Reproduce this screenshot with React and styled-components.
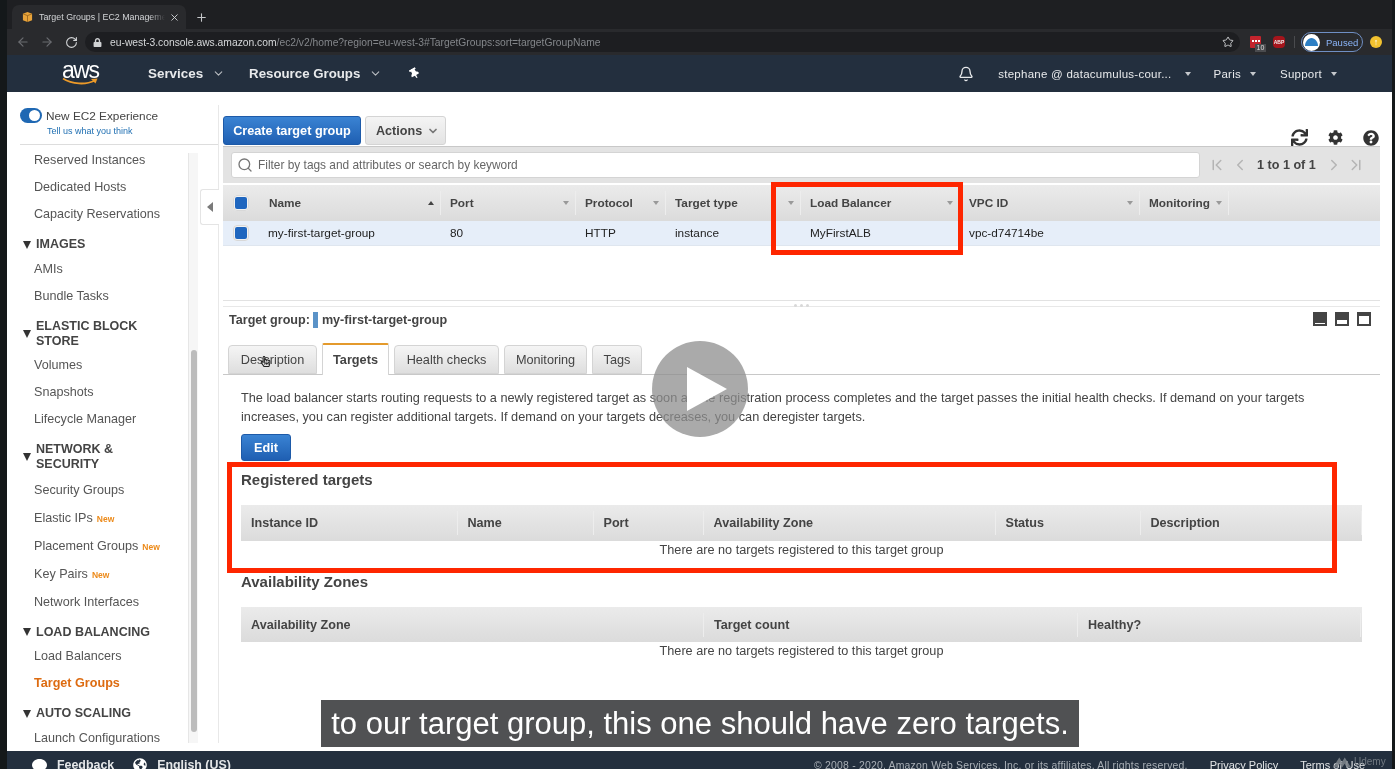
import React from 'react'
import styled, { createGlobalStyle } from 'styled-components'
import { ArrowLeft, ArrowRight, RotateCw, Star, Bell, Search, ChevronFirst, ChevronLast, ChevronLeft, ChevronRight, ChevronDown, X, Plus } from 'lucide-react'
import { FaLock, FaSync, FaCog, FaQuestionCircle, FaThumbtack, FaComment, FaGlobeAmericas, FaRegHandPointer } from 'react-icons/fa'

const Global = createGlobalStyle`
  html, body { margin: 0; padding: 0; background: #14181a; }
  body { font-family: "Liberation Sans", Arial, sans-serif; color: #444; }
  * { box-sizing: border-box; }
`

const Screen = styled.div`
  position: relative;
  width: 1395px;
  height: 769px;
  overflow: hidden;
  padding: 0 3px 0 7px;
  background: #14181a;
  display: flex;
  flex-direction: column;
  filter: blur(0.35px);
`

/* browser chrome */
const TabStrip = styled.div`
  height: 29px;
  background: #1e1f22;
  display: flex;
  align-items: flex-end;
  padding-left: 5px;
  flex: none;
`
const BrowserTab = styled.div`
  width: 174px;
  height: 24px;
  background: #292a2d;
  border-radius: 7px 7px 0 0;
  display: flex;
  align-items: center;
  padding: 0 6px 0 10px;
  color: #d2d4d6;
  font-size: 8.9px;
  white-space: nowrap;
  span {
    width: 126px;
    margin: 0 4px 0 6px;
    overflow: hidden;
    -webkit-mask-image: linear-gradient(90deg, #000 88%, transparent);
    mask-image: linear-gradient(90deg, #000 88%, transparent);
  }
`
const NewTab = styled.div`
  margin: 0 0 5px 9px;
  color: #c4c6c9;
  display: flex;
`
const Toolbar = styled.div`
  height: 26px;
  background: #292a2d;
  display: flex;
  align-items: center;
  padding-left: 4px;
  flex: none;
  color: #b6b8ba;
`
const NavButton = styled.div`
  width: 24px;
  display: flex;
  justify-content: center;
  color: ${p => (p.$off ? '#6a6c70' : '#d4d6d8')};
`
const Omnibox = styled.div`
  width: 1155px;
  height: 20px;
  margin-left: 2px;
  background: #1d1e21;
  border-radius: 10px;
  display: flex;
  align-items: center;
  padding: 0 6px 0 8px;
  font-size: 10.3px;
  color: #84878b;
  white-space: nowrap;
  b { font-weight: 400; color: #d6d8da; }
`
const LockIcon = styled(FaLock)`
  color: #d0d2d4;
  margin-right: 8px;
`
const Url = styled.div`
  flex: 1;
`
const ExtSlot = styled.div`
  position: relative;
  width: 12px;
  height: 12px;
  flex: none;
  margin-left: ${p => p.$gap}px;
`
const PassIcon = styled.div`
  width: 11px;
  height: 12px;
  background: #c3242d;
  border-radius: 1px;
  padding-top: 4px;
  display: flex;
  justify-content: center;
  gap: 1px;
  i {
    display: block;
    width: 2px;
    height: 2px;
    background: #fff;
  }
`
const PassBadge = styled.div`
  position: absolute;
  left: 5px;
  top: 8px;
  width: 11px;
  height: 8px;
  background: #4a4b4e;
  color: #ddd;
  font-size: 7px;
  line-height: 8px;
  text-align: center;
`
const AbpIcon = styled.div`
  width: 12px;
  height: 12px;
  border-radius: 4px;
  background: #a5151c;
  color: #eee;
  font-size: 5px;
  font-weight: 700;
  line-height: 12px;
  text-align: center;
`
const ToolSep = styled.div`
  width: 1px;
  height: 12px;
  background: #4a4b4e;
  margin-left: 9px;
`
const ProfilePill = styled.div`
  width: 62px;
  height: 20px;
  margin-left: 6px;
  border: 1px solid #6f8fc4;
  border-radius: 10px;
  display: flex;
  align-items: center;
  padding-left: 1px;
  gap: 6px;
  color: #8ab4f8;
  font-size: 9.5px;
`
const UpdateDot = styled.div`
  width: 12px;
  height: 12px;
  margin-left: 7px;
  border-radius: 50%;
  background: #f2c230;
  color: #fff;
  font-size: 9px;
  line-height: 12px;
  text-align: center;
`

/* aws console nav */
const AwsNav = styled.div`
  height: 37px;
  background: #232f3e;
  display: flex;
  align-items: center;
  color: #e8eaec;
  flex: none;
`
const AwsLogo = styled.div`
  width: 37px;
  margin-left: 55px;
  height: 27px;
  color: #fff;
  font-size: 23px;
  line-height: 20px;
  letter-spacing: -1.5px;
  svg { display: block; margin-top: -3px; }
`
const NavMenu = styled.div`
  display: flex;
  align-items: center;
  font-size: ${p => p.$size || 13.4}px;
  font-weight: 700;
  margin-left: ${p => p.$gap}px;
  gap: 9px;
  white-space: nowrap;
  svg { color: #b9bdc2; }
`
const NavRight = styled.div`
  margin-left: auto;
  display: flex;
  align-items: center;
  padding: 1px 55px 0 0;
`
const AccountMenu = styled.div`
  display: flex;
  align-items: center;
  font-size: 11.5px;
  letter-spacing: 0.25px;
  margin-left: ${p => p.$gap}px;
  gap: ${p => p.$caretGap || 9}px;
  white-space: nowrap;
`
const TinyCaret = styled.i`
  display: block;
  width: 0;
  height: 0;
  border-left: 3.5px solid transparent;
  border-right: 3.5px solid transparent;
  border-top: 4px solid #c5c8cc;
  flex: none;
`

/* page */
const Page = styled.div`
  flex: 1;
  min-height: 0;
  background: #fff;
  display: flex;
`
const Sidebar = styled.aside`
  position: relative;
  width: 212px;
  margin: 13px 0 8px;
  border-right: 1px solid #e8e8e8;
  display: flex;
  flex-direction: column;
  flex: none;
`
const ExperienceBox = styled.div`
  height: 40px;
  margin-left: 13px;
  border-bottom: 1px solid #ddd;
  display: flex;
  gap: 4px;
  padding-top: 3px;
  flex: none;
`
const Toggle = styled.div`
  width: 22px;
  height: 15px;
  background: #1f68b3;
  border-radius: 8px;
  display: flex;
  justify-content: flex-end;
  padding: 2px;
  &::after {
    content: '';
    width: 11px;
    height: 11px;
    background: #fff;
    border-radius: 50%;
  }
`
const ExperienceTitle = styled.div`
  font-size: 11.8px;
  line-height: 16px;
  color: #444;
  white-space: nowrap;
`
const FeedbackLink = styled.div`
  font-size: 9px;
  line-height: 14px;
  color: #1f6fb2;
  margin-left: 1px;
`
const NavWrap = styled.div`
  flex: 1;
  min-height: 0;
  display: flex;
`
const NavList = styled.div`
  width: 181px;
  padding: 2px 0 0 27px;
  flex: none;
`
const NavItem = styled.div`
  height: ${p => (p.$tall ? 28 : 27)}px;
  line-height: ${p => (p.$tall ? 28 : 27)}px;
  font-size: 12.6px;
  color: ${p => (p.$active ? '#dd6b10' : '#555')};
  font-weight: ${p => (p.$active ? 700 : 400)};
  white-space: nowrap;
  em {
    font-style: normal;
    font-weight: 700;
    font-size: 8.5px;
    color: #ec8a1a;
    margin-left: 4px;
  }
`
const NavHead = styled.div`
  display: flex;
  align-items: center;
  gap: 5px;
  margin: 9px 0 3.5px -11px;
  font-size: 12.5px;
  line-height: 15px;
  font-weight: 700;
  color: #444;
  &::before {
    content: '';
    width: 0;
    height: 0;
    border-left: 4.5px solid transparent;
    border-right: 4.5px solid transparent;
    border-top: 8px solid #333;
    flex: none;
  }
`
const ScrollTrack = styled.div`
  width: 10px;
  margin-top: 8px;
  border-left: 1px solid #e6e6e6;
  background: #f6f6f6;
  padding-top: 197px;
  flex: none;
`
const ScrollThumb = styled.div`
  width: 6px;
  height: 382px;
  margin-left: 2px;
  border-radius: 3px;
  background: #bcbcbc;
`
const CollapseTab = styled.div`
  position: absolute;
  left: 193px;
  top: 84px;
  width: 19px;
  height: 36px;
  background: #fff;
  border: 1px solid #e4e4e4;
  border-right: none;
  border-radius: 3px 0 0 3px;
  display: flex;
  align-items: center;
  justify-content: center;
  &::before {
    content: '';
    border-top: 5.5px solid transparent;
    border-bottom: 5.5px solid transparent;
    border-right: 6px solid #7a7a7a;
  }
`

const Main = styled.main`
  width: 1157px;
  margin-left: 4px;
  padding-top: 24px;
  flex: none;
`
const ActionRow = styled.div`
  height: 29px;
  display: flex;
  gap: 4px;
`
const PrimaryButton = styled.div`
  height: ${p => p.$h || 29}px;
  width: ${p => p.$w}px;
  background: linear-gradient(#3a83d3, #1f5fb2);
  border: 1px solid #1d5aa8;
  border-radius: 3px;
  color: #fff;
  font-size: 12.7px;
  font-weight: 700;
  display: flex;
  align-items: center;
  justify-content: center;
  flex: none;
`
const GreyButton = styled.div`
  width: 81px;
  height: 29px;
  background: linear-gradient(#f4f4f4, #e3e3e3);
  border: 1px solid #d4d4d4;
  border-radius: 3px;
  color: #444;
  font-size: 12.6px;
  font-weight: 700;
  display: flex;
  align-items: center;
  padding-left: 10px;
  gap: 5px;
  svg { color: #777; }
`
const ToolIcons = styled.div`
  margin-left: auto;
  display: flex;
  align-items: center;
  height: 17px;
  align-self: flex-end;
  gap: 20px;
  color: #333;
  padding-right: 1px;
  transform: translateY(1px);
`
const FilterBar = styled.div`
  margin-top: 1px;
  height: 37px;
  background: #e3e3e3;
  border-top: 1px solid #c8c8c8;
  display: flex;
  align-items: center;
  padding-left: 8px;
`
const FilterInput = styled.div`
  width: 969px;
  height: 26px;
  background: #fff;
  border: 1px solid #d4d4d4;
  border-radius: 3px;
  display: flex;
  align-items: center;
  padding-left: 5px;
  gap: 5px;
  font-size: 11.9px;
  color: #666;
  svg { color: #777; }
`
const Pager = styled.div`
  display: flex;
  align-items: center;
  margin-left: 8px;
  color: #b4b4b4;
  span {
    font-size: 12.6px;
    font-weight: 700;
    color: #444;
    margin: 0 9px 0 8px;
    white-space: nowrap;
  }
`
const PagerGap = styled.div`
  display: flex;
  margin-left: ${p => p.$gap}px;
`
const TableHead = styled.div`
  display: grid;
  grid-template-columns: ${p => p.$cols};
  height: ${p => p.$h}px;
  background: linear-gradient(#ebebeb, #dbdbdb);
  align-items: center;
  margin-top: ${p => p.$top || 0}px;
  padding-bottom: ${p => p.$lift || 0}px;
`
const HeadCell = styled.div`
  height: 24px;
  display: flex;
  align-items: center;
  justify-content: space-between;
  padding: 0 6px 0 ${p => p.$pad ?? 9}px;
  border-right: 1px solid #ededed;
  color: #444;
  font-weight: 700;
  font-size: ${p => p.$size || 11.8}px;
  white-space: nowrap;
`
const SortCaret = styled.i`
  display: block;
  width: 0;
  height: 0;
  border-left: 3.5px solid transparent;
  border-right: 3.5px solid transparent;
  ${p => (p.$up ? 'border-bottom: 4px solid #444;' : 'border-top: 4px solid #999;')}
`
const CheckCell = styled.div`
  display: flex;
  justify-content: center;
  padding-right: 1px;
`
const BlueCheck = styled.div`
  width: 16px;
  height: 16px;
  background: #1f66bf;
  border: 2px solid #f2f2f2;
  outline: 1px solid #d8d8d8;
  outline-offset: -1px;
  border-radius: 4px;
`
const TableRow = styled.div`
  display: grid;
  grid-template-columns: ${p => p.$cols};
  height: 25px;
  align-items: center;
  background: #e6eef9;
  border-bottom: 1px solid #dfe6ef;
  font-size: 11.8px;
  color: #222;
`
const RowCell = styled.div`
  padding-left: ${p => p.$pad ?? 9}px;
  white-space: nowrap;
`
const SplitDivider = styled.div`
  height: 7px;
  margin-top: 54px;
  border-top: 1px solid #e2e2e2;
  border-bottom: 1px solid #e8e8e8;
  display: flex;
  justify-content: center;
  gap: 3px;
  padding-top: 3px;
  i {
    display: block;
    width: 3px;
    height: 3px;
    border-radius: 50%;
    background: #d8d8d8;
  }
`
const DetailHead = styled.div`
  height: 38px;
  display: flex;
  align-items: flex-start;
  padding: 5px 9px 0 6px;
  font-size: 12.6px;
  line-height: 16px;
  font-weight: 700;
  color: #444;
`
const NameMark = styled.span`
  display: inline-block;
  width: 5px;
  height: 16px;
  margin: 0 4px 0 3px;
  background: #5b93c8;
`
const PaneIcons = styled.div`
  margin-left: auto;
  display: flex;
  gap: 8px;
`
const PaneIcon = styled.div`
  width: 14px;
  height: 14px;
  background: #444;
  display: flex;
  flex-direction: column;
  justify-content: flex-end;
  padding: ${p => (p.$fill === 'top' ? '4px 2px 2px' : '0 2px 2px')};
  &::after {
    content: '';
    display: block;
    background: #fff;
    height: ${p => (p.$fill === 'small' ? 1 : p.$fill === 'mid' ? 4 : 8)}px;
  }
`
const TabRow = styled.div`
  height: 30px;
  display: flex;
  gap: 5px;
  padding-left: 5px;
  border-bottom: 1px solid #c8c8c8;
`
const DetailTab = styled.div`
  position: relative;
  width: ${p => p.$w}px;
  height: ${p => (p.$active ? 32 : 29)}px;
  margin-top: ${p => (p.$active ? -2 : 0)}px;
  background: ${p => (p.$active ? '#fff' : 'linear-gradient(#f5f5f5, #dedede)')};
  border: 1px solid #d4d4d4;
  border-top: ${p => (p.$active ? '2px solid #e49a2c' : '1px solid #d4d4d4')};
  border-bottom: ${p => (p.$active ? 'none' : '1px solid #d4d4d4')};
  border-radius: ${p => (p.$active ? '2px 2px 0 0' : '4px 4px 0 0')};
  font-size: 12.7px;
  font-weight: ${p => (p.$active ? 700 : 400)};
  color: #444;
  display: flex;
  align-items: center;
  justify-content: center;
`
const HandCursor = styled(FaRegHandPointer)`
  position: absolute;
  left: 31px;
  top: 10px;
  color: #222;
`
const TabBody = styled.div`
  padding: 12.5px 18px 0;
`
const Blurb = styled.p`
  margin: 0 0 8.5px;
  font-size: 12.73px;
  line-height: 19px;
  color: #444;
  white-space: nowrap;
`
const SectionTitle = styled.h3`
  margin: ${p => p.$top}px 0 15px;
  font-size: 15px;
  line-height: 20px;
  font-weight: 700;
  color: #444;
`
const EmptyRow = styled.div`
  height: 19px;
  line-height: 19px;
  text-align: center;
  font-size: 12.68px;
  color: #444;
`

/* footer */
const Footer = styled.footer`
  height: 18px;
  background: #232f3e;
  flex: none;
  overflow: hidden;
  display: flex;
  padding-top: 6px;
  line-height: 17px;
  color: #e4e6e8;
  white-space: nowrap;
`
const FootLink = styled.div`
  display: flex;
  align-items: flex-start;
  gap: 10px;
  margin-left: ${p => p.$gap}px;
  font-weight: ${p => (p.$bold ? 700 : 400)};
  font-size: ${p => p.$size || 12.4}px;
  svg { margin-top: 1px; flex: none; }
`
const Copyright = styled.div`
  margin-left: auto;
  font-size: 10.45px;
  color: #a9afb6;
  letter-spacing: 0.2px;
`
const Watermark = styled.div`
  position: absolute;
  left: 1332px;
  top: 755px;
  display: flex;
  align-items: flex-start;
  gap: 2px;
  color: #7f868d;
  font-size: 10px;
  line-height: 13px;
  opacity: 0.85;
`

/* video overlays */
const Callout = styled.div`
  position: absolute;
  left: ${p => p.$x}px;
  top: ${p => p.$y}px;
  width: ${p => p.$w}px;
  height: ${p => p.$h}px;
  border: 5px solid #fe2600;
`
const PlayDisc = styled.div`
  position: absolute;
  left: 652px;
  top: 341px;
  width: 96px;
  height: 96px;
  border-radius: 50%;
  background: rgba(142, 142, 142, 0.75);
  display: flex;
  align-items: center;
  padding-left: 35px;
`
const Caption = styled.div`
  position: absolute;
  left: 321px;
  top: 700px;
  width: 758px;
  height: 47px;
  background: #505153;
  color: #fff;
  font-size: 31px;
  line-height: 47px;
  text-align: center;
  white-space: nowrap;
`

const topCols = '36px 182px 135px 90px 135px 159px 180px 89px 1fr'
const regCols = '216.5px 136px 110px 292px 145px 221px 1fr'
const zoneCols = '463px 374px 283px 1fr'

const sidebarGroups = [
  { items: ['Reserved Instances', 'Dedicated Hosts', 'Capacity Reservations'] },
  { head: 'IMAGES', items: ['AMIs', 'Bundle Tasks'] },
  { head: ['ELASTIC BLOCK', 'STORE'], items: ['Volumes', 'Snapshots', 'Lifecycle Manager'] },
  {
    head: ['NETWORK &', 'SECURITY'],
    tall: true,
    items: ['Security Groups', 'Elastic IPs*', 'Placement Groups*', 'Key Pairs*', 'Network Interfaces'],
  },
  { head: 'LOAD BALANCING', items: ['Load Balancers', 'Target Groups'] },
  { head: 'AUTO SCALING', items: ['Launch Configurations'] },
]

const columns = [
  { name: 'Name', up: true },
  { name: 'Port' },
  { name: 'Protocol' },
  { name: 'Target type' },
  { name: 'Load Balancer' },
  { name: 'VPC ID' },
  { name: 'Monitoring' },
]

function SideNav() {
  return (
    <NavList>
      {sidebarGroups.map((group, i) => (
        <React.Fragment key={i}>
          {group.head && (
            <NavHead>
              <div>
                {[].concat(group.head).map(line => (
                  <div key={line}>{line}</div>
                ))}
              </div>
            </NavHead>
          )}
          {group.items.map(item => {
            const isNew = item.endsWith('*')
            return (
              <NavItem key={item} $tall={group.tall} $active={item === 'Target Groups'}>
                {item.replace('*', '')}
                {isNew && <em>New</em>}
              </NavItem>
            )
          })}
        </React.Fragment>
      ))}
    </NavList>
  )
}

function EmptyTable({ cols, labels, height, lift }) {
  return (
    <>
      <TableHead $cols={cols} $h={height} $lift={lift}>
        {labels.map(label => (
          <HeadCell key={label} $size={12.6} $pad={10}>{label}</HeadCell>
        ))}
      </TableHead>
      <EmptyRow>There are no targets registered to this target group</EmptyRow>
    </>
  )
}

export default function App() {
  return (
    <Screen>
      <Global />
      <TabStrip>
        <BrowserTab>
          <svg width="11" height="12" viewBox="0 0 12 12">
            <path d="M6 0.5 11 2.5V9.5L6 11.5 1 9.5V2.5Z" fill="#e8a33a" />
            <path d="M6 4.5V11.5M1 2.5 6 4.5 11 2.5" stroke="#8a5a18" strokeWidth="0.8" fill="none" />
          </svg>
          <span>Target Groups | EC2 Management Console</span>
          <X size={11} />
        </BrowserTab>
        <NewTab><Plus size={13} /></NewTab>
      </TabStrip>

      <Toolbar>
        <NavButton $off><ArrowLeft size={14} /></NavButton>
        <NavButton $off><ArrowRight size={14} /></NavButton>
        <NavButton><RotateCw size={13} /></NavButton>
        <Omnibox>
          <LockIcon size={9} />
          <Url><b>eu-west-3.console.aws.amazon.com</b>/ec2/v2/home?region=eu-west-3#TargetGroups:sort=targetGroupName</Url>
          <Star size={12} color="#c8cacc" />
        </Omnibox>
        <ExtSlot $gap={10}>
          <PassIcon><i /><i /><i /></PassIcon>
          <PassBadge>10</PassBadge>
        </ExtSlot>
        <ExtSlot $gap={11}><AbpIcon>ABP</AbpIcon></ExtSlot>
        <ToolSep />
        <ProfilePill>
          <svg width="17" height="17" viewBox="0 0 17 17">
            <circle cx="8.5" cy="8.5" r="8.5" fill="#fff" />
            <path d="M2 12C2 8 5 4 8.5 4S15 8 15 12Z" fill="#2d7fc4" />
          </svg>
          Paused
        </ProfilePill>
        <UpdateDot>↑</UpdateDot>
      </Toolbar>

      <AwsNav>
        <AwsLogo>
          aws
          <svg width="37" height="9" viewBox="0 0 37 9">
            <path d="M1 1.5C10 7.5 24 8 33 3.5" stroke="#ec9a29" strokeWidth="1.8" fill="none" />
            <path d="M29 2 35.5 1.5 33.5 6.5Z" fill="#ec9a29" />
          </svg>
        </AwsLogo>
        <NavMenu $gap={49}>Services <ChevronDown size={13} /></NavMenu>
        <NavMenu $gap={24} $size={13.25}>Resource Groups <ChevronDown size={13} /></NavMenu>
        <NavMenu $gap={27}><FaThumbtack size={11} color="#fff" style={{ transform: 'rotate(-30deg)' }} /></NavMenu>
        <NavRight>
          <Bell size={16} />
          <AccountMenu $gap={24} $caretGap={13}>stephane @ datacumulus-cour... <TinyCaret /></AccountMenu>
          <AccountMenu $gap={23}>Paris <TinyCaret /></AccountMenu>
          <AccountMenu $gap={24}>Support <TinyCaret /></AccountMenu>
        </NavRight>
      </AwsNav>

      <Page>
        <Sidebar>
          <ExperienceBox>
            <Toggle />
            <div>
              <ExperienceTitle>New EC2 Experience</ExperienceTitle>
              <FeedbackLink>Tell us what you think</FeedbackLink>
            </div>
          </ExperienceBox>
          <NavWrap>
            <SideNav />
            <ScrollTrack><ScrollThumb /></ScrollTrack>
          </NavWrap>
          <CollapseTab />
        </Sidebar>

        <Main>
          <ActionRow>
            <PrimaryButton $w={138}>Create target group</PrimaryButton>
            <GreyButton>Actions <ChevronDown size={12} strokeWidth={3.5} /></GreyButton>
            <ToolIcons>
              <FaSync size={17} />
              <FaCog size={15} />
              <FaQuestionCircle size={16} />
            </ToolIcons>
          </ActionRow>

          <FilterBar>
            <FilterInput>
              <Search size={16} />
              Filter by tags and attributes or search by keyword
            </FilterInput>
            <Pager>
              <ChevronFirst size={18} />
              <PagerGap $gap={5}><ChevronLeft size={18} /></PagerGap>
              <span>1 to 1 of 1</span>
              <ChevronRight size={18} />
              <PagerGap $gap={4}><ChevronLast size={18} /></PagerGap>
            </Pager>
          </FilterBar>

          <TableHead $cols={topCols} $h={36} $top={2}>
            <CheckCell><BlueCheck /></CheckCell>
            {columns.map(col => (
              <HeadCell key={col.name} $pad={col.name === 'Name' ? 10 : 9}>
                {col.name}
                <SortCaret $up={col.up} />
              </HeadCell>
            ))}
          </TableHead>
          <TableRow $cols={topCols}>
            <CheckCell><BlueCheck /></CheckCell>
            <RowCell>my-first-target-group</RowCell>
            <RowCell>80</RowCell>
            <RowCell>HTTP</RowCell>
            <RowCell>instance</RowCell>
            <RowCell>MyFirstALB</RowCell>
            <RowCell>vpc-d74714be</RowCell>
          </TableRow>

          <SplitDivider><i /><i /><i /></SplitDivider>

          <DetailHead>
            Target group:<NameMark />my-first-target-group
            <PaneIcons>
              <PaneIcon $fill="small" />
              <PaneIcon $fill="mid" />
              <PaneIcon $fill="top" />
            </PaneIcons>
          </DetailHead>

          <TabRow>
            <DetailTab $w={89}>Description<HandCursor size={11} /></DetailTab>
            <DetailTab $w={67} $active>Targets</DetailTab>
            <DetailTab $w={105}>Health checks</DetailTab>
            <DetailTab $w={83}>Monitoring</DetailTab>
            <DetailTab $w={50}>Tags</DetailTab>
          </TabRow>

          <TabBody>
            <Blurb>
              The load balancer starts routing requests to a newly registered target as soon as the registration process completes and the target passes the initial health checks. If demand on your targets<br />
              increases, you can register additional targets. If demand on your targets decreases, you can deregister targets.
            </Blurb>
            <PrimaryButton $w={50} $h={27}>Edit</PrimaryButton>
            <SectionTitle $top={9}>Registered targets</SectionTitle>
            <EmptyTable
              cols={regCols}
              height={36}
              lift={1}
              labels={['Instance ID', 'Name', 'Port', 'Availability Zone', 'Status', 'Description']}
            />
            <SectionTitle $top={12}>Availability Zones</SectionTitle>
            <EmptyTable
              cols={zoneCols}
              height={35}
              labels={['Availability Zone', 'Target count', 'Healthy?']}
            />
          </TabBody>
        </Main>
      </Page>

      <Footer>
        <FootLink $gap={25} $bold>
          <FaComment size={15} color="#fff" />Feedback
        </FootLink>
        <FootLink $gap={19} $bold>
          <FaGlobeAmericas size={14} color="#fff" />English (US)
        </FootLink>
        <Copyright>© 2008 - 2020, Amazon Web Services, Inc. or its affiliates. All rights reserved.</Copyright>
        <FootLink $gap={22} $size={11}>Privacy Policy</FootLink>
        <FootLink $gap={22} $size={11}>Terms of Use</FootLink>
        <FootLink $gap={27} />
      </Footer>

      <Callout $x={771} $y={182} $w={192} $h={73} />
      <Callout $x={227} $y={462} $w={1110} $h={111} />
      <PlayDisc>
        <svg width="40" height="44" viewBox="0 0 40 44">
          <path d="M0 0 40 22 0 44Z" fill="#fff" />
        </svg>
      </PlayDisc>
      <Caption>to our target group, this one should have zero targets.</Caption>
      <Watermark>
        <svg width="20" height="14" viewBox="0 0 22 14">
          <path d="M1 13 8 2 11 7 14 2 21 13H16L14 9 11 13 8 9 6 13Z" fill="#7f868d" />
        </svg>
        Udemy
      </Watermark>
    </Screen>
  )
}
